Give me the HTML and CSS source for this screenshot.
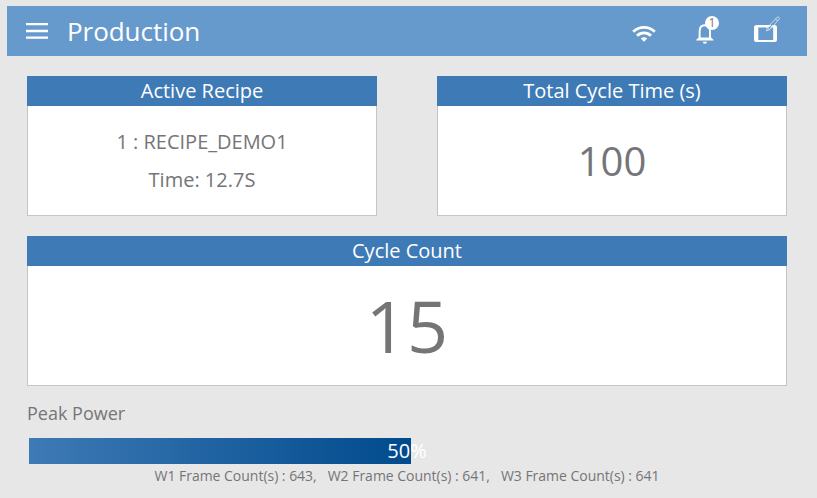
FILE: index.html
```html
<!DOCTYPE html>
<html lang="en">
<head>
<meta charset="utf-8">
<title>Production</title>
<link rel="stylesheet" href="styles.css">
</head>
<body>
<div class="app">
  <header class="topbar">
    <svg class="menu" width="24" height="24" viewBox="0 0 24 24"><path d="M1 5.2h22M1 12h22M1 18.6h22" stroke="#fff" stroke-width="2.3"/></svg>
    <h1 class="title">Production</h1>
    <div class="tools">
      <svg class="wifi" width="24" height="24" viewBox="0 0 24 24" fill="none" stroke="#fff" stroke-width="2.7"><path d="M1.2 10.8a15.3 15.3 0 0 1 21.6 0M5 14.8a9.9 9.9 0 0 1 14 0"/><path d="M12 20.800l-3.200-3.300a4.600 4.600 0 0 1 6.400 0z" fill="#fff" stroke="none"/></svg>
      <div class="alerts">
        <svg width="18" height="24" viewBox="0 0 18 24"><path d="M3.6 19v-7.5c0-4 2-6.2 5.2-6.2s5.2 2.200 5.200 6.200V19" fill="none" stroke="#fff" stroke-width="1.9"/><path d="M.3 19.700l2.300-2.300h12.500l2.300 2.300v.8H.3zM6.800 21.700h4.200a2.100 2.100 0 0 1-4.200 0z" fill="#fff"/></svg>
        <span class="badge">1</span>
      </div>
      <svg class="tablet" width="27" height="28" viewBox="0 0 27 28"><path fill="#fff" fill-rule="evenodd" d="M2.500 9h18a2.500 2.500 0 0 1 2.500 2.500v12a2.500 2.500 0 0 1-2.500 2.500h-18A2.500 2.500 0 0 1 0 23.500v-12A2.500 2.500 0 0 1 2.500 9zM4.300 11.500V24h14.900V11.500z"/><path d="M12.500 14.800l.8-3.300L23.800.7l1.900 1.800-10 11.200zM21.500 3.100l2.100 1.800M13.300 11.500l2.400 2.200" fill="none" stroke="#e7f0f8" stroke-width=".8"/><path d="M14.700 11.800l7.200-7.500.6.600-7.200 7.700z" fill="#669acc"/></svg>
    </div>
  </header>

  <main class="content">
    <div class="row">
      <section class="card">
        <h2 class="card-head">Active Recipe</h2>
        <div class="card-body recipe"><p>1 : RECIPE_DEMO1</p><p>Time: 12.7S</p></div>
      </section>
      <section class="card">
        <h2 class="card-head">Total Cycle Time (s)</h2>
        <div class="card-body time">100</div>
      </section>
    </div>
    <section class="card count-card">
      <h2 class="card-head">Cycle Count</h2>
      <div class="card-body count">15</div>
    </section>
    <div class="power-label">Peak Power</div>
    <div class="progress">
      <div class="fill" style="width:382px"></div>
      <span class="percent">50%</span>
    </div>
    <div class="frames"><span>W1 Frame Count(s) : 643,</span><span>W2 Frame Count(s) : 641,</span><span>W3 Frame Count(s) : 641</span></div>
  </main>
</div>
</body>
</html>
```
FILE: styles.css
```css
* { box-sizing: border-box; }
body {
  margin: 0;
  background: #e7e7e7;
  color: #757578;
  font-family: "Open Sans", sans-serif;
}
h1, h2, p { margin: 0; font-weight: 400; }
svg { display: block; }
.app { width: 800px; height: 498px; margin-left: 7px; padding-top: 6px; overflow: hidden; }
.topbar {
  display: flex;
  align-items: center;
  height: 50px;
  padding: 0 27px 0 18px;
  background: #669acc;
  color: #fff;
}
.title { margin-left: 18px; font-size: 26px; line-height: 50px; letter-spacing: -0.05px; }
.tools { display: flex; align-items: flex-start; margin-left: auto; height: 50px; padding-top: 10px; }
.wifi { margin-top: 5px; }
.alerts { position: relative; margin: 4px 40px 0 40px; }
.badge {
  position: absolute;
  left: 9px;
  top: -4px;
  width: 14px;
  height: 14px;
  border-radius: 50%;
  background: #fff;
  color: #757578;
  font-size: 12px;
  line-height: 14px;
  text-align: center;
}
.tablet { margin-right: -1px; }
.content { padding: 20px; }
.row { display: flex; justify-content: space-between; }
.row .card { width: 350px; height: 140px; }
.card { display: flex; flex-direction: column; }
.card-head {
  height: 30px;
  background: #3e7ab5;
  color: #fff;
  font-size: 20px;
  line-height: 30px;
  text-align: center;
}
.card-body {
  flex: 1;
  display: flex;
  align-items: center;
  justify-content: center;
  background: #fff;
  border: 1px solid #c5c5c5;
  border-top: 0;
}
.recipe { flex-direction: column; font-size: 20px; line-height: 38px; }
.time { font-size: 40px; }
.count-card { height: 150px; margin-top: 20px; }
.count { padding-bottom: 2px; font-size: 72px; }
.power-label { margin-top: 13px; font-size: 18px; line-height: 28px; }
.progress { position: relative; height: 26px; margin: 11px 2px 0; }
.fill { height: 100%; background: linear-gradient(90deg, #3e7ab5, #004a8d); }
.percent {
  position: absolute;
  left: 0;
  right: 0;
  top: 0;
  color: #fff;
  font-size: 20px;
  line-height: 26px;
  text-align: center;
}
.frames { display: flex; justify-content: center; gap: 11px; font-size: 14px; line-height: 24px; letter-spacing: -0.02px; }
```
